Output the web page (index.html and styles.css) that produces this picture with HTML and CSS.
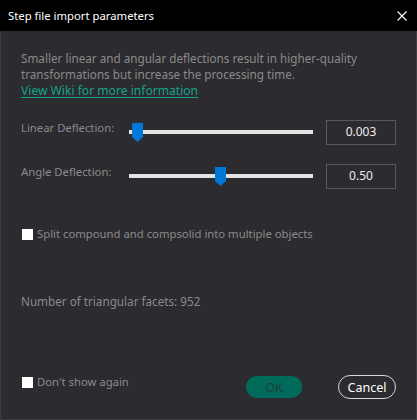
FILE: index.html
```html
<!DOCTYPE html>
<html>
<head>
<meta charset="utf-8">
<link rel="stylesheet" href="styles.css">
</head>
<body>
<div class="dialog">
  <div class="titlebar">
    <span class="title">Step file import parameters</span>
    <svg class="close" width="10" height="10" viewBox="0 0 10 10"><path d="M0.5 0.5 L9.5 9.5 M9.5 0.5 L0.5 9.5" stroke="#fff" stroke-width="1.1" fill="none"/></svg>
  </div>
  <div class="content">
    <p class="desc">Smaller linear and angular deflections result in higher-quality transformations but increase the processing time.<br><a class="link" href="#">View Wiki for more information</a></p>
    <div class="row first">
      <span class="label">Linear Deflection:</span>
      <div class="slider">
        <div class="track"></div>
        <svg class="thumb" style="left:3px" width="11" height="19" viewBox="0 0 11 19"><path d="M0 0 H11 V14 L5.5 19 L0 14 Z" fill="#0078d7"/></svg>
      </div>
      <div class="value">0.003</div>
    </div>
    <div class="row">
      <span class="label">Angle Deflection:</span>
      <div class="slider">
        <div class="track"></div>
        <svg class="thumb" style="left:86px" width="11" height="19" viewBox="0 0 11 19"><path d="M0 0 H11 V14 L5.5 19 L0 14 Z" fill="#0078d7"/></svg>
      </div>
      <div class="value">0.50</div>
    </div>
    <label class="check split"><span class="box"></span>Split compound and compsolid into multiple objects</label>
    <p class="facets">Number of triangular facets: 952</p>
    <div class="footer">
      <label class="check"><span class="box"></span>Don't show again</label>
      <div class="buttons">
        <button class="btn ok">OK</button>
        <button class="btn cancel">Cancel</button>
      </div>
    </div>
  </div>
</div>
</body>
</html>
```

FILE: styles.css
```css
* { box-sizing: border-box; }
html, body { margin: 0; padding: 0; background: #2c2b30; }
body { font-family: "Noto Sans", "Open Sans", sans-serif; font-size: 11.3px; line-height: 16px; color: #8a8a8a; }
.dialog { width: 417px; height: 420px; border: 1px solid #3e3e42; border-top: none; background: #2c2b30; display: flex; flex-direction: column; }
.titlebar { height: 31px; background: #000; color: #fff; display: flex; align-items: center; justify-content: space-between; padding: 0 10px 0 8px; margin: 0 -1px; }
.title { font-size: 11.3px; padding-top: 1px; }
.close { display: block; margin-top: 1px; }
.content { flex: 1; display: flex; flex-direction: column; padding: 19px 20px 20px 20px; }
.desc { margin: 0; font-size: 11.7px; }
.link { color: #16a38a; text-decoration: underline; text-underline-offset: 2px; font-size: 12.1px; }
.row { display: flex; align-items: flex-start; height: 25px; margin-top: 19px; }
.row.first { margin-top: 21px; }
.label { width: 108px; flex: none; }
.slider { position: relative; width: 184px; height: 25px; flex: none; }
.track { position: absolute; left: 0; right: 0; top: 10px; height: 4px; background: #e4e4e4; }
.thumb { position: absolute; top: 3px; display: block; }
.value { margin-left: 13px; width: 70px; height: 25px; border: 1px solid #5a5a5a; color: #ececec; text-align: center; line-height: 22px; font-size: 12px; }
.check { display: flex; align-items: center; gap: 4px; }
.box { width: 11px; height: 11px; background: #fff; margin-left: 1px; flex: none; }
.split { margin-top: 37px; }
.facets { margin: 51px 0 0 0; font-size: 11.7px; }
.footer { margin-top: auto; display: flex; justify-content: space-between; align-items: flex-start; }
.buttons { display: flex; gap: 36px; align-items: center; padding-top: 1px; }
.btn { font-family: inherit; font-size: 12.5px; border-radius: 12px; padding: 0; cursor: pointer; }
.ok { width: 56px; height: 22px; background: #006b5a; color: #1e3f38; border: none; }
.cancel { width: 58px; height: 24px; background: transparent; color: #fff; border: 1px solid #d8d8d8; }
```
